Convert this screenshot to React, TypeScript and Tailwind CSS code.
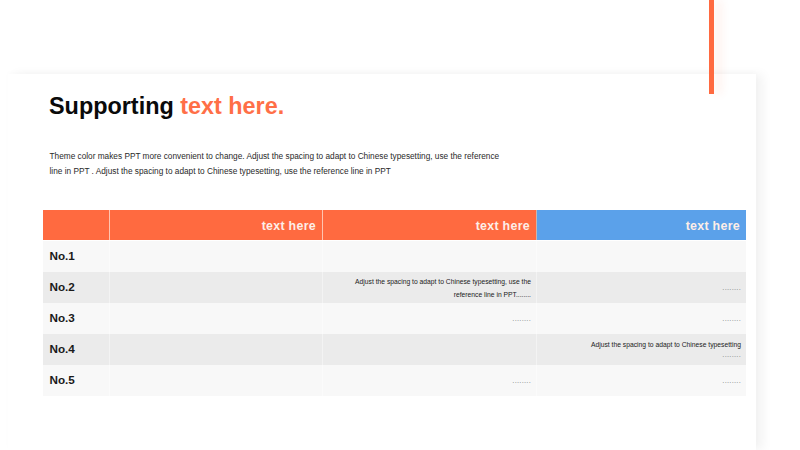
const rows = [
  { no: 'No.1', a: null, b: null, c: null },
  { no: 'No.2', a: null, b: ['Adjust the spacing to adapt to Chinese typesetting, use the', 'reference line in PPT........'], c: ['........'] },
  { no: 'No.3', a: null, b: ['........'], c: ['........'] },
  { no: 'No.4', a: null, b: null, c: ['Adjust the spacing to adapt to Chinese typesetting', '........'] },
  { no: 'No.5', a: null, b: ['........'], c: ['........'] },
]

function Cell({ lines, dark, tight }: { lines: string[] | null; dark: boolean; tight?: boolean }) {
  return (
    <div className={`flex flex-col justify-center items-end pr-[5px] border-l border-white/40 ${dark ? 'bg-[#ebebeb]' : 'bg-[#f8f8f8]'}`}>
      {lines?.map((l, i) => (
        <p
          key={i}
          className={`whitespace-nowrap ${tight ? 'leading-[10px]' : 'leading-[13px]'} ${l === '........' ? 'text-[7.5px] tracking-[0.25px] text-[#808080]' : 'text-[6.75px] text-[#222222]'}`}
        >
          {l}
        </p>
      ))}
    </div>
  )
}

export default function App() {
  return (
    <div className="relative w-[800px] h-[450px] overflow-hidden bg-white font-['Liberation_Sans',Arial,sans-serif]">
      {/* accent bar */}
      <div className="absolute left-[709px] top-0 w-[5px] h-[94px] bg-[#ff6a40] shadow-[7px_0_8px_rgba(255,106,64,0.12)] z-10" />

      <div className="ml-[8px] mt-[74px] w-[748px] h-[376px] bg-white shadow-[7px_0_10px_rgba(0,0,0,0.05),0_-2px_5px_rgba(0,0,0,0.015)] pl-[35px] pt-[19px]">
        <h1 className="ml-[6px] text-[23.4px] leading-[27px] font-bold text-[#0a0a0a]">
          Supporting <span className="text-[#ff6f47]">text here.</span>
        </h1>
        <p className="ml-[6.5px] mt-[29px] w-[460px] text-[8.28px] leading-[15px] text-[#2a2a2a]">
          Theme color makes PPT more convenient to change. Adjust the spacing to adapt to Chinese typesetting, use the reference line in PPT . Adjust the spacing to adapt to Chinese typesetting, use the reference line in PPT
        </p>

        <div className="mt-[31px] w-[703px] grid grid-cols-[66px_213px_214px_210px]">
          <div className="h-[30px] bg-[#ff6a40]" />
          {['text here', 'text here', 'text here'].map((t, i) => (
            <div
              key={i}
              className={`h-[30px] flex items-center justify-end pr-[6px] pt-[2px] border-l text-[12.4px] font-bold tracking-[0.3px] text-[#fdeee8] ${i === 2 ? 'bg-[#5ba1ea] border-[#c9b7b0]' : 'bg-[#ff6a40] border-[#ffc4b0]'}`}
            >
              {t}
            </div>
          ))}
          <div className="col-span-4 h-px bg-white" />
          {rows.map((r, i) => {
            const dark = i % 2 === 1
            return (
              <div key={r.no} className="col-span-4 grid grid-cols-subgrid h-[31px]">
                <div className={`flex items-center pl-[6.5px] pb-[1px] text-[11.7px] font-bold text-[#1a1a1a] ${dark ? 'bg-[#ebebeb]' : 'bg-[#f8f8f8]'}`}>{r.no}</div>
                <Cell lines={r.a} dark={dark} />
                <Cell lines={r.b} dark={dark} />
                <Cell lines={r.c} dark={dark} tight={r.no === 'No.4'} />
              </div>
            )
          })}
        </div>
      </div>
    </div>
  )
}
